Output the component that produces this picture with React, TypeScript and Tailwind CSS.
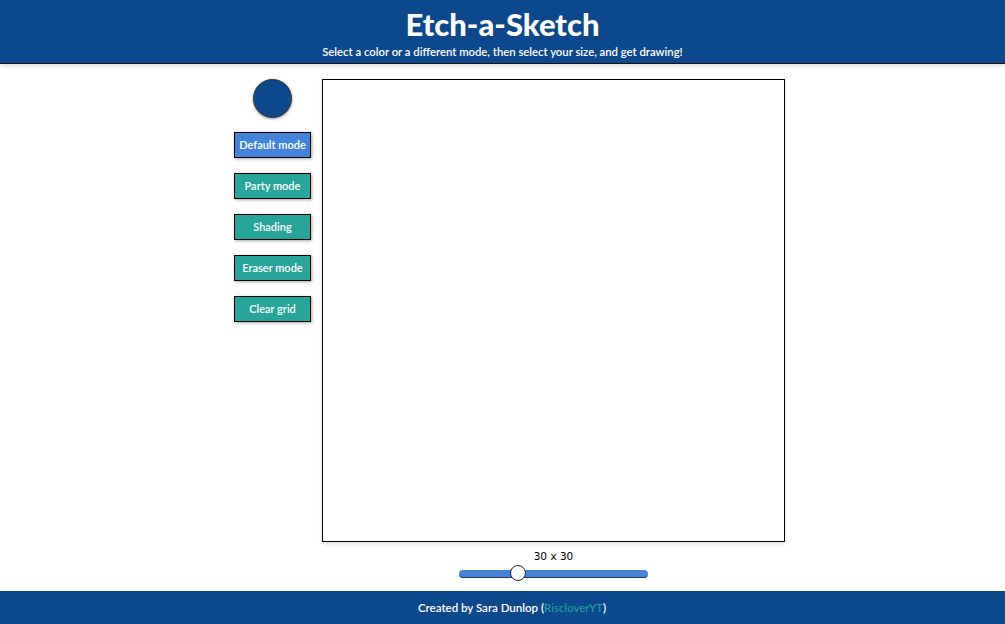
import React from "react";

const gill = { fontFamily: '"Lato", "Open Sans", sans-serif' };

function Btn({ label, active }: { label: string; active?: boolean }) {
  return (
    <button
      className={`w-[77px] h-[26px] border border-black text-white text-[11px] font-semibold shadow-[1px_1px_3px_rgba(0,0,0,0.35)] ${
        active ? "bg-[#4184d9]" : "bg-[#27a59a]"
      }`}
      style={gill}
    >
      {label}
    </button>
  );
}

export default function App() {
  return (
    <div className="w-[1005px] h-[624px] flex flex-col bg-white overflow-hidden">
      <header
        className="h-[64px] bg-[#0b488c] border-b border-[#111] shadow-[0_2px_4px_rgba(0,0,0,0.15)] flex flex-col items-center text-white"
        style={gill}
      >
        <h1 className="text-[31px] font-black leading-none mt-[9px]">Etch-a-Sketch</h1>
        <p className="text-[11.3px] font-semibold mt-[6px] leading-none">
          Select a color or a different mode, then select your size, and get drawing!
        </p>
      </header>
      <main className="flex-1 flex justify-center pl-[14px] pt-[15px]">
        <div className="flex gap-[11px]">
          <div className="w-[77px] flex flex-col items-center">
            <div className="w-[39px] h-[39px] rounded-full bg-[#0b488c] border border-[#333] shadow-[0_1px_3px_rgba(0,0,0,0.4)]" />
            <div className="flex flex-col gap-[15px] mt-[14px]">
              <Btn label="Default mode" active />
              <Btn label="Party mode" />
              <Btn label="Shading" />
              <Btn label="Eraser mode" />
              <Btn label="Clear grid" />
            </div>
          </div>
          <div className="flex flex-col items-center">
            <div className="w-[463px] h-[463px] border border-black bg-white shadow-[0_2px_4px_rgba(0,0,0,0.12)]" />
            <div
              className="text-[10.5px] text-black mt-[9px] leading-none"
              style={{ fontFamily: '"DejaVu Sans", sans-serif' }}
            >
              30 x 30
            </div>
            <div className="relative w-[189px] h-[8px] mt-[8px] rounded-full bg-[#4184d9] border-b border-[#2a3a55]">
              <div className="absolute left-[51px] top-[-5px] w-[16px] h-[16px] rounded-full bg-white border-[1.5px] border-[#1b2440]" />
            </div>
          </div>
        </div>
      </main>
      <footer
        className="h-[33px] bg-[#0b488c] flex items-center justify-center pl-[19px] text-white text-[11.5px] font-semibold"
        style={gill}
      >
        <span>
          Created by Sara Dunlop (<span className="text-[#27a59a] font-normal">RiscloverYT</span>)
        </span>
      </footer>
    </div>
  );
}
